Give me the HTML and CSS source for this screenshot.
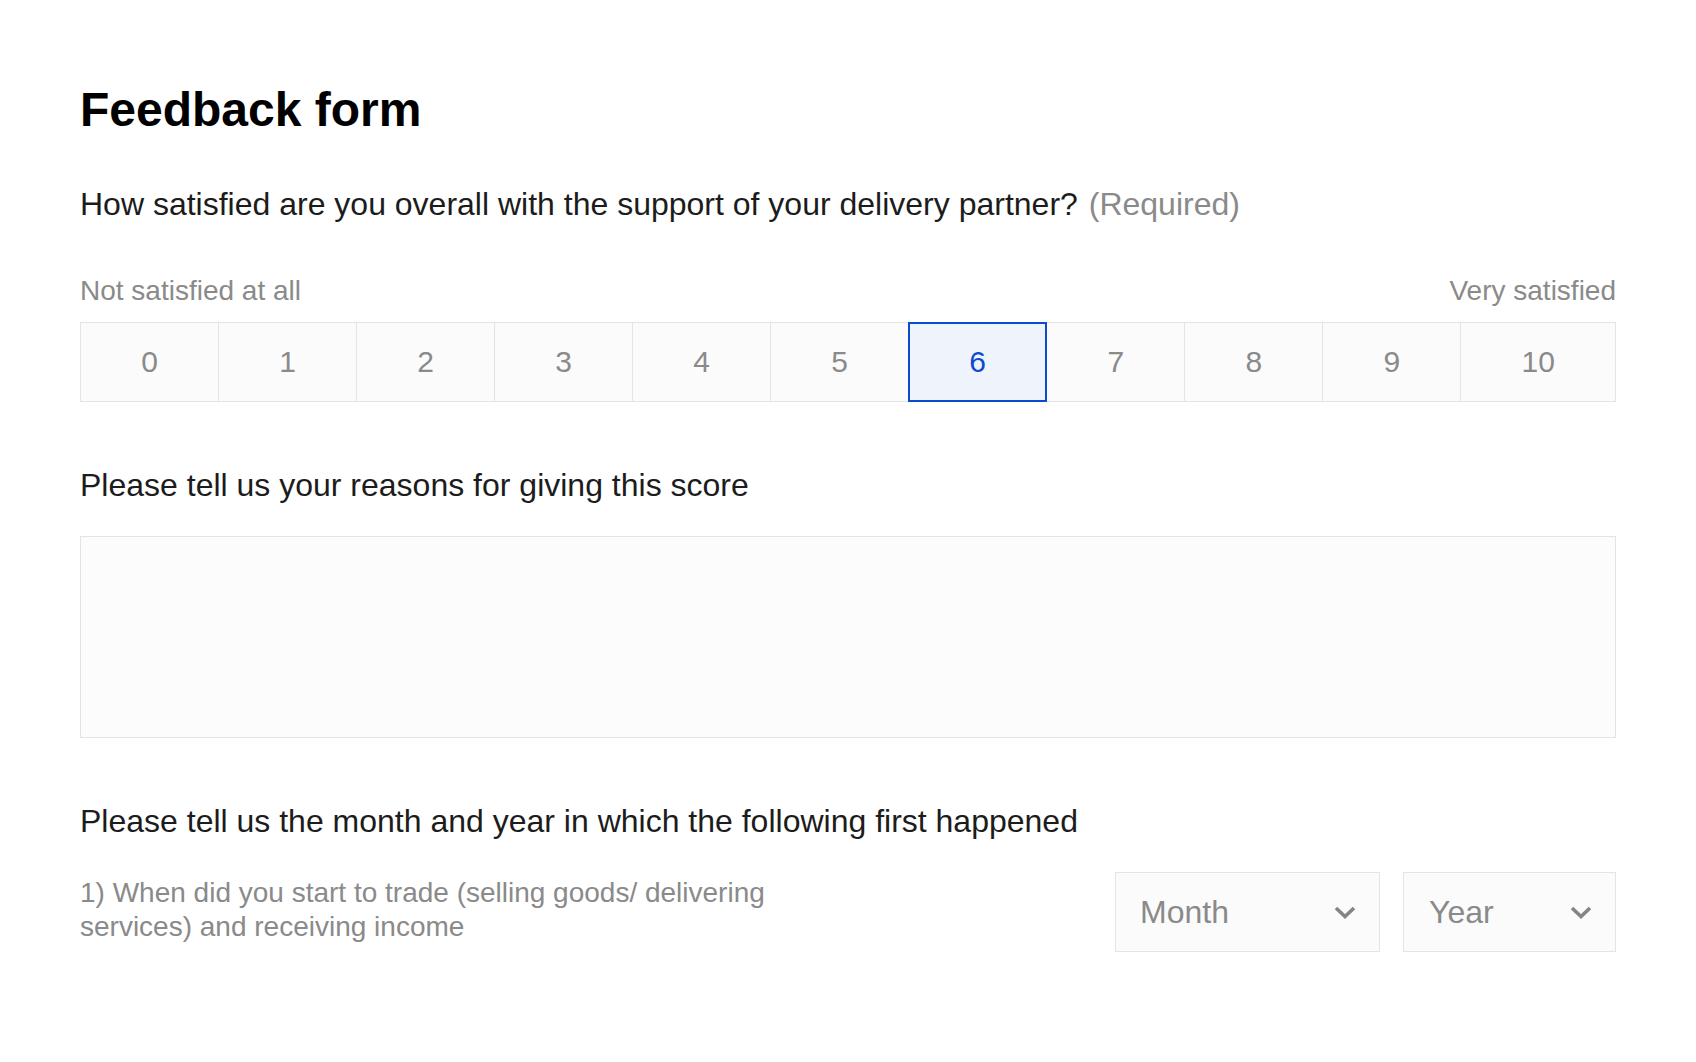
FILE: index.html
```html
<!DOCTYPE html>
<html lang="en">
<head>
<meta charset="utf-8">
<title>Feedback form</title>
<link rel="stylesheet" href="styles.css">
</head>
<body>
<main class="page">
  <h1 class="title">Feedback form</h1>

  <section class="question">
    <p class="q-text">How satisfied are you overall with the support of your delivery partner? <span class="required">(Required)</span></p>
    <div class="scale-labels">
      <span>Not satisfied at all</span>
      <span>Very satisfied</span>
    </div>
    <div class="scale">
      <div class="cell">0</div>
      <div class="cell">1</div>
      <div class="cell">2</div>
      <div class="cell">3</div>
      <div class="cell">4</div>
      <div class="cell">5</div>
      <div class="cell selected">6</div>
      <div class="cell">7</div>
      <div class="cell">8</div>
      <div class="cell">9</div>
      <div class="cell">10</div>
    </div>
  </section>

  <section class="question q-reasons">
    <p class="q-text">Please tell us your reasons for giving this score</p>
    <textarea class="reasons"></textarea>
  </section>

  <section class="question q-date">
    <p class="q-text">Please tell us the month and year in which the following first happened</p>
    <div class="date-row">
      <p class="date-label">1) When did you start to trade (selling goods/ delivering services) and receiving income</p>
      <div class="selects">
        <div class="select select-month">
          <span>Month</span>
          <svg class="chev" width="22" height="13" viewBox="0 0 22 13"><path d="M2 2 L11 10.5 L20 2" fill="none" stroke="#858585" stroke-width="3.6"/></svg>
        </div>
        <div class="select select-year">
          <span>Year</span>
          <svg class="chev" width="22" height="13" viewBox="0 0 22 13"><path d="M2 2 L11 10.5 L20 2" fill="none" stroke="#858585" stroke-width="3.6"/></svg>
        </div>
      </div>
    </div>
  </section>
</main>
</body>
</html>
```

FILE: styles.css
```css
* { box-sizing: border-box; }

body {
  margin: 0;
  background: #ffffff;
  font-family: "Liberation Sans", Arial, Helvetica, sans-serif;
  color: #1c1c1c;
}

.page {
  padding: 82px 80px 0;
}

.title {
  margin: 0;
  font-size: 48px;
  line-height: 56px;
  font-weight: 700;
  color: #000;
}

.question {
  margin-top: 46px;
}

.q-text {
  margin: 0;
  font-size: 32px;
  line-height: 40px;
  color: #1c1c1c;
}

.required {
  color: #8a8a8a;
  margin-left: 2px;
}

.scale-labels {
  margin-top: 50px;
  display: flex;
  justify-content: space-between;
  font-size: 28px;
  line-height: 34px;
  color: #8a8a8a;
}

.scale {
  margin-top: 14px;
  display: flex;
  height: 80px;
  border: 1px solid #e4e4e4;
  background: #fbfbfb;
}

.cell {
  flex: 1 1 auto;
  display: flex;
  align-items: center;
  justify-content: center;
  font-size: 30px;
  color: #8a8a8a;
  border-left: 1px solid #e4e4e4;
}

.cell:first-child { border-left: none; }

.cell.selected {
  position: relative;
  background: #eef3fc;
  color: #0b4bce;
}

.cell.selected::after {
  content: "";
  position: absolute;
  top: -1px;
  bottom: -1px;
  left: -1px;
  right: -1px;
  border: 2px solid #0b4bce;
}

.q-reasons {
  margin-top: 63px;
}

.reasons {
  display: block;
  margin-top: 31px;
  width: 100%;
  height: 202px;
  border: 1px solid #e4e4e4;
  background: #fcfcfc;
  resize: none;
  font: inherit;
}

.q-date {
  margin-top: 63px;
}

.date-row {
  margin-top: 31px;
  display: flex;
  justify-content: space-between;
  align-items: flex-start;
}

.date-label {
  margin: 0;
  padding-top: 4px;
  max-width: 50%;
  font-size: 28px;
  line-height: 34px;
  color: #8a8a8a;
}

.selects {
  display: flex;
  gap: 23px;
}

.select {
  height: 80px;
  display: flex;
  align-items: center;
  justify-content: space-between;
  padding: 0 23px 0 24px;
  border: 1px solid #e4e4e4;
  background: #fbfbfb;
  font-size: 32px;
  color: #8a8a8a;
}

.select-month { width: 265px; }
.select-year { width: 213px; padding-left: 25px; }

.chev { display: block; }
```
